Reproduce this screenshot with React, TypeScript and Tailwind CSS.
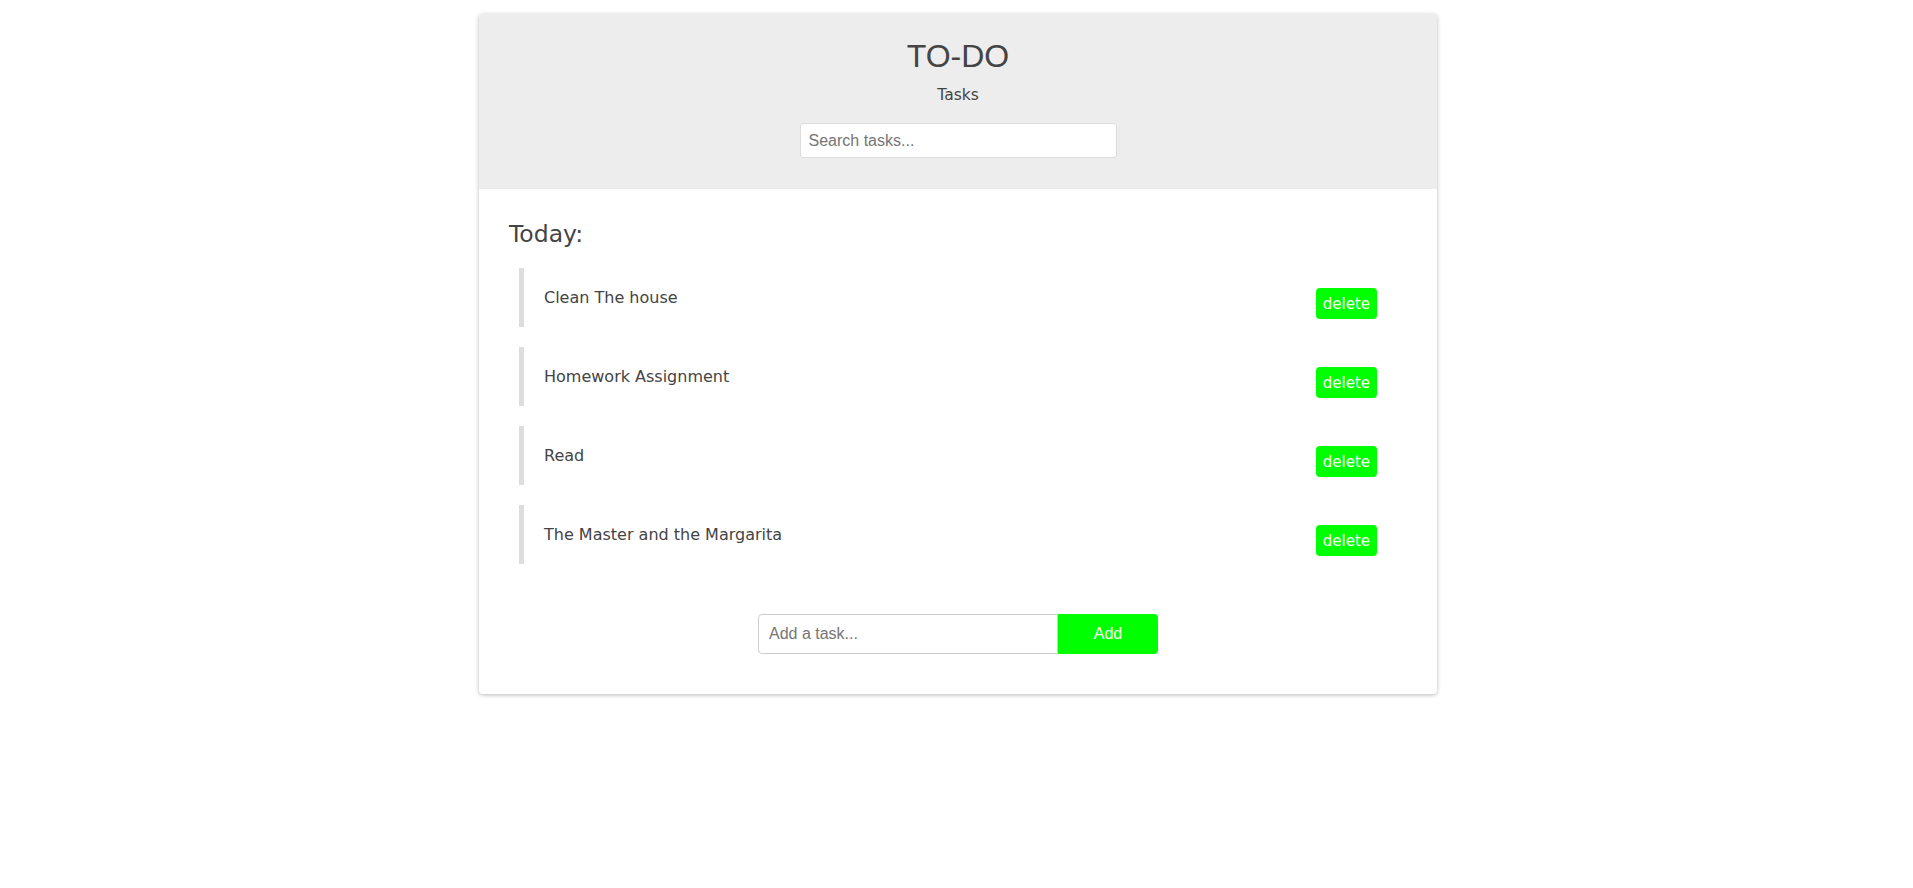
import React from "react";

const tasks = [
  "Clean The house",
  "Homework Assignment",
  "Read",
  "The Master and the Margarita",
];

export default function App() {
  return (
    <div className="min-h-screen bg-white pt-[14px] pl-[3px] flex justify-center items-start">
      <div className="w-[958px] rounded-[4px] bg-white shadow-[0_1px_4px_rgba(0,0,0,0.28)] overflow-hidden">
        <div className="flex flex-col items-center bg-[#ededed] pt-[26px] pb-[31px]">
          <h1 className="text-[32px] leading-[32px] text-[#444] font-['Liberation_Sans',Arial,sans-serif]">
            TO-DO
          </h1>
          <p className="mt-[13px] text-[15.5px] leading-[20px] text-[#444] font-['DejaVu_Sans',Verdana,sans-serif]">
            Tasks
          </p>
          <input
            type="text"
            placeholder="Search tasks..."
            className="mt-[18px] h-[35px] w-[317px] rounded-[3px] border border-[#dcdcdc] bg-white px-[8px] text-[16px] text-[#444] font-['Liberation_Sans',Arial,sans-serif] placeholder:text-[#757575] outline-none"
          />
        </div>
        <div className="px-[30px] pt-[31px] pb-[40px]">
          <h2 className="text-[23.5px] leading-[29px] text-[#444] font-['DejaVu_Sans',Verdana,sans-serif]">
            Today:
          </h2>
          <ul className="mt-[19px] flex flex-col gap-[20px] pl-[10px] pr-[30px]">
            {tasks.map((t) => (
              <li
                key={t}
                className="flex h-[59px] items-start justify-between border-l-[5px] border-[#dddddd] pl-[20px]"
              >
                <span className="pt-[18px] text-[16px] leading-[24px] text-[#444] font-['DejaVu_Sans',Verdana,sans-serif]">
                  {t}
                </span>
                <button className="mt-[20px] rounded-[4px] bg-[#00ff00] px-[7px] pt-[6px] pb-[4px] text-[15px] leading-[21px] text-white font-['DejaVu_Sans',Verdana,sans-serif]">
                  delete
                </button>
              </li>
            ))}
          </ul>
          <div className="mt-[50px] flex justify-center">
            <input
              type="text"
              placeholder="Add a task..."
              className="h-[40px] w-[300px] rounded-l-[4px] border border-[#cccccc] bg-white px-[10px] text-[16px] text-[#444] font-['Liberation_Sans',Arial,sans-serif] placeholder:text-[#757575] outline-none"
            />
            <button className="h-[40px] w-[100px] rounded-r-[4px] bg-[#00ff00] text-[16px] text-white font-['Liberation_Sans',Arial,sans-serif]">
              Add
            </button>
          </div>
        </div>
      </div>
    </div>
  );
}
